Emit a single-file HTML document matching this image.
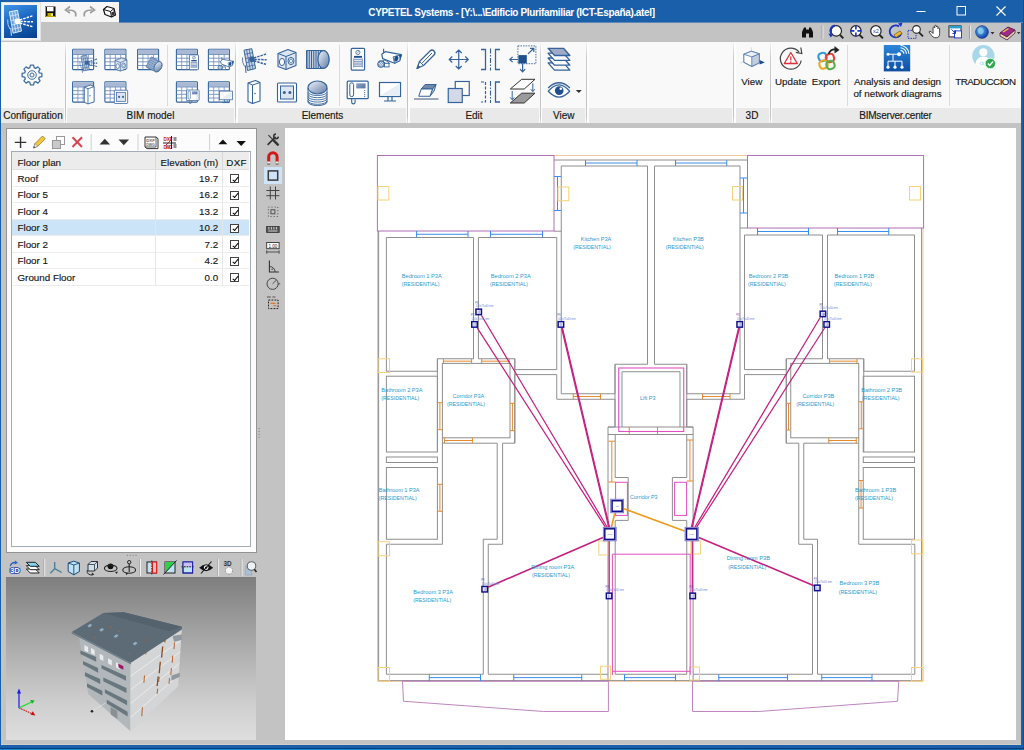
<!DOCTYPE html>
<html lang="en"><head><meta charset="utf-8"><title>CYPETEL Systems</title>
<style>
*{box-sizing:border-box}
html,body{margin:0;padding:0}
body{width:1024px;height:750px;overflow:hidden;position:relative;background:#1a5fa9;font-family:"Liberation Sans",sans-serif;font-size:10px;color:#1a1a1a}
.abs{position:absolute}
#win{left:1px;top:22px;width:1020px;height:722.8px;background:#c3c3c3}
#title{left:0;top:0;width:1024px;height:22px;background:#1a5fa9}
#ttext{left:368px;top:5.5px;width:287px;height:14px;color:#fff;font-size:10px;line-height:14px;white-space:nowrap;text-align:center;font-weight:bold;letter-spacing:-0.34px}
#appb{left:1px;top:2px;width:39.5px;height:38.5px;background:#f4f4f4;border:1px solid #e2e2e2}
#appi{left:4px;top:5px;width:33px;height:32.5px;background:linear-gradient(160deg,#3e95e8 0%,#1a66c0 45%,#06408c 100%)}
#qat{left:40.5px;top:2px;width:78.5px;height:20.3px;background:#f6f6f6}
#ribbon{left:1px;top:42px;width:1020px;height:66px;background:#f9f9f9}
#rlabels{left:1px;top:108px;width:1020px;height:15px;background:#e9e9e9}
.gl{position:absolute;top:108px;height:15px;line-height:15px;font-size:10px;text-align:center;white-space:nowrap;color:#111}
.gsep{position:absolute;top:42px;width:3.5px;height:81px;background:linear-gradient(90deg,#f9f9f9 0,#f9f9f9 .8px,transparent .6px,transparent 2.4px,#fdfdfd 2.4px),linear-gradient(180deg,#f3f3f3 0,#cdcdcd 18%,#c2c2c2 60%,#c4c4c4 92%,#e4e4e4 100%)}
.isep{position:absolute;top:45px;width:1px;height:61px;background:#dcdcdc}
.bl{position:absolute;font-size:9.8px;line-height:12px;text-align:center;white-space:nowrap;color:#222}
#lpanel{left:6px;top:128px;width:251px;height:425px;background:#fcfcfc;border:1px solid #939393}
#tbl{left:11px;top:151.2px;width:239.5px;height:395.8px;background:#fff;border:1px solid #a3acb9}
table{border-collapse:collapse;table-layout:fixed;width:237px;font-size:9.8px}
td,th{height:16.5px;padding:1.4px 0 0 0;border-bottom:1px solid #ececec;border-right:1px solid #e6e6e6;font-weight:normal;white-space:nowrap;overflow:hidden;line-height:14px}
th{background:#ececec;border-right:1px solid #d8d8d8;border-bottom:1px solid #e0e0e0;height:17.8px}
td.n,th.n{text-align:left;padding-left:5.5px}
td.e,th.e{text-align:right;padding-right:3.5px}
td.c,th.c{text-align:center;border-right:none;padding-right:2px}
th.c{padding-right:0;padding-left:1.5px;letter-spacing:.3px}
tr.sel td{background:#cce4f7}
.hs{position:relative;top:1.4px}
table,.gl,.bl{-webkit-text-stroke:0.14px #222;color:#111}
.cb{display:inline-block;width:9px;height:9px;border:1px solid #444;background:#fff;vertical-align:-1.5px;position:relative}
.cb:after{content:"";position:absolute;left:2.2px;top:0.2px;width:2.4px;height:4.8px;border:solid #000;border-width:0 1.7px 1.7px 0;transform:rotate(40deg)}
#v3d{left:6px;top:577px;width:249.7px;height:163px;background:linear-gradient(180deg,#7e7e7e 0%,#a9a9a9 40%,#cfcfcf 78%,#dedede 100%)}
#draw{left:284.5px;top:128px;width:731.5px;height:612px;background:#fff}
#vsel{left:263.7px;top:166.7px;width:18px;height:17.1px;background:#cfe4f7}
#botline{left:1px;top:744px;width:1020px;height:1px;background:#d2cdc8}
#bot2{left:0;top:747.5px;width:1024px;height:1.6px;background:#0a3c82}
#bot3{left:0;top:749px;width:1024px;height:1px;background:linear-gradient(90deg,#1e8ed0 0,#1e86c8 40%,#1a62ac 100%)}
#tb2{left:119px;top:22px;width:905px;height:1px;background:#5e88b9}
#rb{left:1023px;top:0;width:1px;height:750px;background:#0f4f98}
svg{position:absolute;left:0;top:0;overflow:visible}
</style></head>
<body>
<div class="abs" id="title"></div>
<div class="abs" id="ttext">CYPETEL Systems - [Y:\...\Edificio Plurifamiliar (ICT-España).atel]</div>
<div class="abs" id="win"></div>
<div class="abs" id="tb2"></div><div class="abs" id="rb"></div>
<div class="abs" id="appb"></div><div class="abs" id="appi"></div>
<div class="abs" id="qat"></div>
<div class="abs" id="ribbon"></div><div class="abs" id="rlabels"></div>
<div class="gsep" style="left:63.75px"></div>
<div class="gsep" style="left:234.45px"></div>
<div class="gsep" style="left:406.45px"></div>
<div class="gsep" style="left:538.75px"></div>
<div class="gsep" style="left:585.45px"></div>
<div class="gsep" style="left:732.25px"></div>
<div class="gsep" style="left:768.5500000000001px"></div>
<div class="isep" style="left:167px"></div>
<div class="isep" style="left:338.5px"></div>
<div class="isep" style="left:847px"></div>
<div class="isep" style="left:949px"></div>
<div class="gl" style="left:-27px;width:120px">Configuration</div>
<div class="gl" style="left:90.5px;width:120px">BIM model</div>
<div class="gl" style="left:262.5px;width:120px">Elements</div>
<div class="gl" style="left:414px;width:120px">Edit</div>
<div class="gl" style="left:503.79999999999995px;width:120px">View</div>
<div class="gl" style="left:692px;width:120px">3D</div>
<div class="gl" style="left:835.4px;width:120px"><span style="letter-spacing:-.2px">BIMserver.center</span></div>
<div class="bl" style="left:691.8px;top:75.5px;width:120px">View</div>
<div class="bl" style="left:730.8px;top:75.5px;width:120px">Update</div>
<div class="bl" style="left:766px;top:75.5px;width:120px">Export</div>
<div class="bl" style="left:837.5px;top:75.5px;width:120px">Analysis and design</div>
<div class="bl" style="left:837.5px;top:88.4px;width:120px">of network diagrams</div>
<div class="bl" style="left:925.4px;top:75.5px;width:120px"><span style="letter-spacing:-.5px">TRADUCCION</span></div>
<div class="abs" id="lpanel"></div>
<div class="abs" id="tbl"><table><colgroup><col style="width:143.2px"><col style="width:67px"><col style="width:26.8px"></colgroup>
<tr><th class="n"><span class="hs">Floor plan</span></th><th class="e"><span class="hs">Elevation (m)</span></th><th class="c"><span class="hs">DXF</span></th></tr>
<tr><td class="n">Roof</td><td class="e">19.7</td><td class="c"><span class="cb"></span></td></tr>
<tr><td class="n">Floor 5</td><td class="e">16.2</td><td class="c"><span class="cb"></span></td></tr>
<tr><td class="n">Floor 4</td><td class="e">13.2</td><td class="c"><span class="cb"></span></td></tr>
<tr class="sel"><td class="n">Floor 3</td><td class="e">10.2</td><td class="c"><span class="cb"></span></td></tr>
<tr><td class="n">Floor 2</td><td class="e">7.2</td><td class="c"><span class="cb"></span></td></tr>
<tr><td class="n">Floor 1</td><td class="e">4.2</td><td class="c"><span class="cb"></span></td></tr>
<tr><td class="n">Ground Floor</td><td class="e">0.0</td><td class="c"><span class="cb"></span></td></tr>
</table></div>
<div class="abs" id="v3d"></div>
<div class="abs" id="vsel"></div>
<div class="abs" id="draw"></div>
<div class="abs" id="botline"></div><div class="abs" id="bot2"></div><div class="abs" id="bot3"></div>
<svg id="ricons" width="1024" height="130" viewBox="0 0 1024 130">
<defs><linearGradient id="tg" x1="0" y1="0" x2="1" y2="1"><stop offset="0" stop-color="#f2f5fa"/><stop offset="1" stop-color="#5f7aa6"/></linearGradient>
<linearGradient id="pg" x1="0" y1="0" x2="1" y2="1"><stop offset="0" stop-color="#93a5c8"/><stop offset="1" stop-color="#5573a5"/></linearGradient>
<linearGradient id="ag" x1="0" y1="0" x2="0" y2="1"><stop offset="0" stop-color="#2b86d9"/><stop offset="1" stop-color="#0f4fa3"/></linearGradient></defs>
<g transform="translate(32 75) scale(1)"><path d="M7.30 -2.12 L9.88 -1.56 L9.88 1.56 L7.30 2.12 L6.66 3.66 L8.09 5.88 L5.88 8.09 L3.66 6.66 L2.12 7.30 L1.56 9.88 L-1.56 9.88 L-2.12 7.30 L-3.66 6.66 L-5.88 8.09 L-8.09 5.88 L-6.66 3.66 L-7.30 2.12 L-9.88 1.56 L-9.88 -1.56 L-7.30 -2.12 L-6.66 -3.66 L-8.09 -5.88 L-5.88 -8.09 L-3.66 -6.66 L-2.12 -7.30 L-1.56 -9.88 L1.56 -9.88 L2.12 -7.30 L3.66 -6.66 L5.88 -8.09 L8.09 -5.88 L6.66 -3.66 Z" fill="#f9f9f9" stroke="#3f6fa6" stroke-width="1.3" stroke-linejoin="round"/><circle r="4.3" fill="none" stroke="#3f6fa6" stroke-width="1"/><circle r="2" fill="none" stroke="#3f6fa6" stroke-width="1"/></g>
<g transform="translate(83.2 59.5) scale(1)"><rect x="-10.6" y="-10.3" width="21" height="20.4" rx=".8" fill="#fff" stroke="#35639b" stroke-width="1.1"/><rect x="-10" y="-9.8" width="19.8" height="4.6" fill="#a9b9d3"/><path d="M-10.6 -5H10.4M-10.6 -1.3H10.4M-10.6 2.3H10.4M-10.6 6H10.4" stroke="#5d82b5" stroke-width=".8" fill="none"/><path d="M-5.3 -5V10M-.1 -5V10M5.2 -5V10" stroke="#6f8fbb" stroke-width=".8" fill="none"/><rect x="-1.5" y="-3" width="13" height="13" fill="#fff" opacity=".0"/><g transform="translate(5 3.5) scale(0.72)"><path d="M-10 -9.3 L-2.2 -10.8 L1.6 9 L-6.4 11 Z" fill="#c9d5e6" stroke="#35639b" stroke-width="1" stroke-linejoin="round"/><path d="M-9.2 -5.2L-1.4 -6.8M-8.3 -1L-.6 -2.7M-7.6 3.2L.2 1.5M-6.9 7.2L1 5.4M-7.4 -9.8L-3.7 10.3M-4.8 -10.3L-1.1 9.7" stroke="#35639b" stroke-width="0.75" fill="none"/><path d="M-11.5 -2 Q-12 3 -9.5 7" stroke="#35639b" stroke-width="0.8" fill="none"/><path d="M-8.6 6 L-8 13.5" stroke="#35639b" stroke-width="1"/><circle cx="-2.2" cy="-.3" r="2.7" fill="#35639b"/><path d="M0 -1.6 L12 -5.4 M.4 -.1 L12.6 .2 M0 1.4 L12 4.8" stroke="#35639b" stroke-width="1.5" stroke-dasharray="2.4 1"/></g></g>
<g transform="translate(115.5 59.5) scale(1)"><rect x="-10.6" y="-10.3" width="21" height="20.4" rx=".8" fill="#fff" stroke="#35639b" stroke-width="1.1"/><rect x="-10" y="-9.8" width="19.8" height="4.6" fill="#a9b9d3"/><path d="M-10.6 -5H10.4M-10.6 -1.3H10.4M-10.6 2.3H10.4M-10.6 6H10.4" stroke="#5d82b5" stroke-width=".8" fill="none"/><path d="M-5.3 -5V10M-.1 -5V10M5.2 -5V10" stroke="#6f8fbb" stroke-width=".8" fill="none"/><rect x="-1" y="-1.5" width="13" height="13" fill="#fff" opacity=".0"/><g transform="translate(5.5 5) scale(0.66)"><path d="M-9 -6 L1 -10 L9 -7 L9 6 L-1 10 L-9 7 Z" fill="#dde5f0" stroke="#35639b" stroke-width="1.1" stroke-linejoin="round"/><path d="M-9 -6 L-1 -3 L9 -7 M-1 -3 V10" fill="none" stroke="#35639b" stroke-width="1"/><ellipse cx="-5" cy="2.5" rx="2.6" ry="3.6" fill="#fff" stroke="#35639b" stroke-width="1"/><ellipse cx="4" cy="1.5" rx="3" ry="3.6" fill="#fff" stroke="#35639b" stroke-width="1"/><ellipse cx="4" cy="1.5" rx="1.5" ry="2" fill="none" stroke="#35639b" stroke-width=".8"/></g></g>
<g transform="translate(148.2 59.5) scale(1)"><rect x="-10.6" y="-10.3" width="21" height="20.4" rx=".8" fill="#fff" stroke="#35639b" stroke-width="1.1"/><rect x="-10" y="-9.8" width="19.8" height="4.6" fill="#a9b9d3"/><path d="M-10.6 -5H10.4M-10.6 -1.3H10.4M-10.6 2.3H10.4M-10.6 6H10.4" stroke="#5d82b5" stroke-width=".8" fill="none"/><path d="M-5.3 -5V10M-.1 -5V10M5.2 -5V10" stroke="#6f8fbb" stroke-width=".8" fill="none"/><rect x="0" y="-1" width="13" height="13" fill="#fff" opacity=".0"/><g transform="translate(6.5 5.5) scale(0.62)"><g transform="translate(0 0) scale(1)"><g transform="rotate(28)"><path d="M-11 -9 H6 A5.5 9 0 0 1 6 9 H-11 Z" fill="#e9eef6" stroke="#35639b" stroke-width="1"/><path d="M-9.6 -9V9M-7.8 -9V9M-6 -9V9M-4.2 -9V9M-2.4 -9V9M-.6 -9V9M1.2 -9V9M3 -9V9" stroke="#35639b" stroke-width="1"/><ellipse cx="6" cy="0" rx="5.6" ry="8.8" fill="url(#tg)" stroke="#35639b" stroke-width="1.2"/></g></g></g></g>
<g transform="translate(187 59.5) scale(1)"><rect x="-10.6" y="-10.3" width="21" height="20.4" rx=".8" fill="#fff" stroke="#35639b" stroke-width="1.1"/><rect x="-10" y="-9.8" width="19.8" height="4.6" fill="#a9b9d3"/><path d="M-10.6 -5H10.4M-10.6 -1.3H10.4M-10.6 2.3H10.4M-10.6 6H10.4" stroke="#5d82b5" stroke-width=".8" fill="none"/><path d="M-5.3 -5V10M-.1 -5V10M5.2 -5V10" stroke="#6f8fbb" stroke-width=".8" fill="none"/><rect x="0.5" y="-3.5" width="13" height="13" fill="#fff" opacity=".0"/><g transform="translate(7 3) scale(0.68)"><rect x="-6.8" y="-11.2" width="13.4" height="21.8" rx="1" fill="#fff" stroke="#35639b" stroke-width="1.2"/><circle cx="-.1" cy="-7" r="2.1" fill="none" stroke="#35639b" stroke-width=".8"/><path d="M-1.2 -6.2 L1 -8" stroke="#35639b" stroke-width=".6"/><rect x="-4" y="-3.6" width="8" height="1.9" fill="#1d4f8f"/><path d="M-4 -.1H4M-4 2.2H4M-4 4.6H4M-4 6.8H4" stroke="#8ea4c8" stroke-width="1.5"/><path d="M-4.4 -1V8M4.4 -1V8" stroke="#35639b" stroke-width=".6"/></g></g>
<g transform="translate(219 59.5) scale(1)"><rect x="-10.6" y="-10.3" width="21" height="20.4" rx=".8" fill="#fff" stroke="#35639b" stroke-width="1.1"/><rect x="-10" y="-9.8" width="19.8" height="4.6" fill="#a9b9d3"/><path d="M-10.6 -5H10.4M-10.6 -1.3H10.4M-10.6 2.3H10.4M-10.6 6H10.4" stroke="#5d82b5" stroke-width=".8" fill="none"/><path d="M-5.3 -5V10M-.1 -5V10M5.2 -5V10" stroke="#6f8fbb" stroke-width=".8" fill="none"/><rect x="0.5" y="-1.5" width="13" height="13" fill="#fff" opacity=".0"/><g transform="translate(7 5) scale(0.66)"><path d="M-6.4 -10.8 V-6" stroke="#35639b" stroke-width="1.1"/><path d="M-7.3 1.6 L-2.2 5.5 L-.6 3.6 L-5 .4 Z" fill="#fff" stroke="#35639b" stroke-width=".9" stroke-linejoin="round"/><rect x="-5.6" y="3.8" width="4.6" height="3.6" fill="#fff" stroke="#35639b" stroke-width=".9"/><circle cx="-9" cy="4.6" r="3.2" fill="#dfe6f1" stroke="#35639b" stroke-width="1.1"/><path d="M-11 2.4L-7.2 6.8M-11.6 4.4L-9 7.4M-9.6 1.8L-6.4 5.2" stroke="#35639b" stroke-width=".6"/><path d="M-8.2 -5.2 L-4.8 -7.8 L11.4 -4.8 L9.7 1.2 L4.6 3.8 L-7.3 -.9 Z" fill="#fff" stroke="#35639b" stroke-width="1.2" stroke-linejoin="round"/><path d="M3 -2.6 L11.4 -4.8 L9.7 1.2 L4.6 3.8 Z" fill="#e3e9f3" stroke="#35639b" stroke-width=".9" stroke-linejoin="round"/><ellipse cx="6.3" cy="-.8" rx="1.9" ry="2.9" fill="#1d4f8f" transform="rotate(18 6.3 -.8)"/><path d="M9 -4.4 L11.4 -4.8 L10 .6Z" fill="#1d4f8f"/></g></g>
<g transform="translate(83.2 92) scale(1)"><rect x="-10.6" y="-10.3" width="21" height="20.4" rx=".8" fill="#fff" stroke="#35639b" stroke-width="1.1"/><rect x="-10" y="-9.8" width="19.8" height="4.6" fill="#a9b9d3"/><path d="M-10.6 -5H10.4M-10.6 -1.3H10.4M-10.6 2.3H10.4M-10.6 6H10.4" stroke="#5d82b5" stroke-width=".8" fill="none"/><path d="M-5.3 -5V10M-.1 -5V10M5.2 -5V10" stroke="#6f8fbb" stroke-width=".8" fill="none"/><rect x="-0.5" y="-4" width="13" height="13" fill="#fff" opacity=".0"/><g transform="translate(6 2.5) scale(0.82)"><path d="M-6 -9 L1.5 -11.5 L6 -9.5 V9 L-1.5 11.5 L-6 9.5 Z" fill="#fff" stroke="#35639b" stroke-width="1.1" stroke-linejoin="round"/><path d="M-6 -9 L-1.5 -7 L6 -9.5 M-1.5 -7 V11.5" fill="none" stroke="#35639b" stroke-width="1"/><circle cx="1" cy="1.5" r=".8" fill="#35639b"/></g></g>
<g transform="translate(115.5 92) scale(1)"><rect x="-10.6" y="-10.3" width="21" height="20.4" rx=".8" fill="#fff" stroke="#35639b" stroke-width="1.1"/><rect x="-10" y="-9.8" width="19.8" height="4.6" fill="#a9b9d3"/><path d="M-10.6 -5H10.4M-10.6 -1.3H10.4M-10.6 2.3H10.4M-10.6 6H10.4" stroke="#5d82b5" stroke-width=".8" fill="none"/><path d="M-5.3 -5V10M-.1 -5V10M5.2 -5V10" stroke="#6f8fbb" stroke-width=".8" fill="none"/><rect x="-1" y="-2" width="13" height="13" fill="#fff" opacity=".0"/><g transform="translate(5.5 4.5) scale(0.7)"><rect x="-9.5" y="-9" width="19" height="19" rx="1" fill="#fff" stroke="#35639b" stroke-width="1.1"/><rect x="-6.5" y="-6" width="13" height="13" fill="#dde5f0" stroke="#35639b" stroke-width="1"/><circle cx="-2.7" cy=".6" r="1.5" fill="#35639b"/><circle cx="2.9" cy=".6" r="1.5" fill="#35639b"/></g></g>
<g transform="translate(187 92) scale(1)"><rect x="-10.6" y="-10.3" width="21" height="20.4" rx=".8" fill="#fff" stroke="#35639b" stroke-width="1.1"/><rect x="-10" y="-9.8" width="19.8" height="4.6" fill="#a9b9d3"/><path d="M-10.6 -5H10.4M-10.6 -1.3H10.4M-10.6 2.3H10.4M-10.6 6H10.4" stroke="#5d82b5" stroke-width=".8" fill="none"/><path d="M-5.3 -5V10M-.1 -5V10M5.2 -5V10" stroke="#6f8fbb" stroke-width=".8" fill="none"/><rect x="-0.5" y="-2" width="13" height="13" fill="#fff" opacity=".0"/><g transform="translate(6 4.5) scale(0.6)"><rect x="-10.8" y="-10.8" width="21" height="17.5" rx="1" fill="#fff" stroke="#35639b" stroke-width="1.2"/><rect x="-8.2" y="-9.1" width="3.8" height="13.6" rx="1.6" fill="#fff" stroke="#35639b" stroke-width="1"/><rect x="-1.8" y="-8.7" width="9.4" height="5.1" fill="url(#pg)"/><circle cx="6.7" cy="-1.5" r=".6" fill="#35639b"/><circle cx="6.7" cy="0.6" r=".6" fill="#35639b"/><circle cx="6.7" cy="2.7" r=".6" fill="#35639b"/><circle cx="6.7" cy="4.6" r=".6" fill="#35639b"/><path d="M-6.3 6.7 V10.2 A1.7 1.7 0 0 0 -2.9 10.2 V7.6" fill="none" stroke="#35639b" stroke-width="1.1"/></g></g>
<g transform="translate(219 92) scale(1)"><rect x="-10.6" y="-10.3" width="21" height="20.4" rx=".8" fill="#fff" stroke="#35639b" stroke-width="1.1"/><rect x="-10" y="-9.8" width="19.8" height="4.6" fill="#a9b9d3"/><path d="M-10.6 -5H10.4M-10.6 -1.3H10.4M-10.6 2.3H10.4M-10.6 6H10.4" stroke="#5d82b5" stroke-width=".8" fill="none"/><path d="M-5.3 -5V10M-.1 -5V10M5.2 -5V10" stroke="#6f8fbb" stroke-width=".8" fill="none"/><rect x="0.5" y="-1.5" width="13" height="13" fill="#fff" opacity=".0"/><g transform="translate(7 5) scale(0.62)"><rect x="-10.5" y="-9.5" width="21" height="14" fill="#fff" stroke="#35639b" stroke-width="1.2"/><path d="M-9 3 L9 -8 V3 Z" fill="#e9eef6"/><path d="M-2 4.5 V8.5 M2 4.5 V8.5 M-6 9 H6" stroke="#35639b" stroke-width="1.2" fill="none"/></g></g>
<g transform="translate(254 59.5) scale(1)"><path d="M-10 -9.3 L-2.2 -10.8 L1.6 9 L-6.4 11 Z" fill="#c9d5e6" stroke="#35639b" stroke-width="1" stroke-linejoin="round"/><path d="M-9.2 -5.2L-1.4 -6.8M-8.3 -1L-.6 -2.7M-7.6 3.2L.2 1.5M-6.9 7.2L1 5.4M-7.4 -9.8L-3.7 10.3M-4.8 -10.3L-1.1 9.7" stroke="#35639b" stroke-width="0.75" fill="none"/><path d="M-11.5 -2 Q-12 3 -9.5 7" stroke="#35639b" stroke-width="0.8" fill="none"/><path d="M-8.6 6 L-8 13.5" stroke="#35639b" stroke-width="1"/><circle cx="-2.2" cy="-.3" r="2.7" fill="#35639b"/><path d="M0 -1.6 L12 -5.4 M.4 -.1 L12.6 .2 M0 1.4 L12 4.8" stroke="#35639b" stroke-width="1.5" stroke-dasharray="2.4 1"/></g>
<g transform="translate(254 92) scale(1)"><path d="M-6 -9 L1.5 -11.5 L6 -9.5 V9 L-1.5 11.5 L-6 9.5 Z" fill="#fff" stroke="#35639b" stroke-width="1.1" stroke-linejoin="round"/><path d="M-6 -9 L-1.5 -7 L6 -9.5 M-1.5 -7 V11.5" fill="none" stroke="#35639b" stroke-width="1"/><circle cx="1" cy="1.5" r=".8" fill="#35639b"/></g>
<g transform="translate(287 59.5) scale(1)"><path d="M-9 -6 L1 -10 L9 -7 L9 6 L-1 10 L-9 7 Z" fill="#dde5f0" stroke="#35639b" stroke-width="1.1" stroke-linejoin="round"/><path d="M-9 -6 L-1 -3 L9 -7 M-1 -3 V10" fill="none" stroke="#35639b" stroke-width="1"/><ellipse cx="-5" cy="2.5" rx="2.6" ry="3.6" fill="#fff" stroke="#35639b" stroke-width="1"/><ellipse cx="4" cy="1.5" rx="3" ry="3.6" fill="#fff" stroke="#35639b" stroke-width="1"/><ellipse cx="4" cy="1.5" rx="1.5" ry="2" fill="none" stroke="#35639b" stroke-width=".8"/></g>
<g transform="translate(287 92) scale(1)"><rect x="-9.5" y="-9" width="19" height="19" rx="1" fill="#fff" stroke="#35639b" stroke-width="1.1"/><rect x="-6.5" y="-6" width="13" height="13" fill="#dde5f0" stroke="#35639b" stroke-width="1"/><circle cx="-2.7" cy=".6" r="1.5" fill="#35639b"/><circle cx="2.9" cy=".6" r="1.5" fill="#35639b"/></g>
<g transform="translate(317.5 59.5) scale(1)"><path d="M-11 -9 H6 A5.5 9 0 0 1 6 9 H-11 Z" fill="#e9eef6" stroke="#35639b" stroke-width="1"/><path d="M-9.6 -9V9M-7.8 -9V9M-6 -9V9M-4.2 -9V9M-2.4 -9V9M-.6 -9V9M1.2 -9V9M3 -9V9" stroke="#35639b" stroke-width="1"/><ellipse cx="6" cy="0" rx="5.6" ry="8.8" fill="url(#tg)" stroke="#35639b" stroke-width="1.2"/></g>
<g transform="translate(317.5 93) scale(1)"><path d="M-9.5 -5 V9 A9.5 3.5 0 0 0 9.5 9 V-5 Z" fill="#fff" stroke="#35639b" stroke-width="1"/><path d="M-9.5 -1A9.5 3.5 0 0 0 9.5 -1M-9.5 1.2A9.5 3.5 0 0 0 9.5 1.2M-9.5 3.4A9.5 3.5 0 0 0 9.5 3.4M-9.5 5.6A9.5 3.5 0 0 0 9.5 5.6M-9.5 7.8A9.5 3.5 0 0 0 9.5 7.8" fill="none" stroke="#35639b" stroke-width=".9"/><ellipse cx="0" cy="-5.5" rx="9.5" ry="6.5" fill="url(#tg)" stroke="#35639b" stroke-width="1.2"/></g>
<g transform="translate(358 59.5) scale(1)"><rect x="-6.8" y="-11.2" width="13.4" height="21.8" rx="1" fill="#fff" stroke="#35639b" stroke-width="1.2"/><circle cx="-.1" cy="-7" r="2.1" fill="none" stroke="#35639b" stroke-width=".8"/><path d="M-1.2 -6.2 L1 -8" stroke="#35639b" stroke-width=".6"/><rect x="-4" y="-3.6" width="8" height="1.9" fill="#1d4f8f"/><path d="M-4 -.1H4M-4 2.2H4M-4 4.6H4M-4 6.8H4" stroke="#8ea4c8" stroke-width="1.5"/><path d="M-4.4 -1V8M4.4 -1V8" stroke="#35639b" stroke-width=".6"/></g>
<g transform="translate(358 92) scale(1)"><rect x="-10.8" y="-10.8" width="21" height="17.5" rx="1" fill="#fff" stroke="#35639b" stroke-width="1.2"/><rect x="-8.2" y="-9.1" width="3.8" height="13.6" rx="1.6" fill="#fff" stroke="#35639b" stroke-width="1"/><rect x="-1.8" y="-8.7" width="9.4" height="5.1" fill="url(#pg)"/><circle cx="6.7" cy="-1.5" r=".6" fill="#35639b"/><circle cx="6.7" cy="0.6" r=".6" fill="#35639b"/><circle cx="6.7" cy="2.7" r=".6" fill="#35639b"/><circle cx="6.7" cy="4.6" r=".6" fill="#35639b"/><path d="M-6.3 6.7 V10.2 A1.7 1.7 0 0 0 -2.9 10.2 V7.6" fill="none" stroke="#35639b" stroke-width="1.1"/></g>
<g transform="translate(390 59.5) scale(1)"><path d="M-6.4 -10.8 V-6" stroke="#35639b" stroke-width="1.1"/><path d="M-7.3 1.6 L-2.2 5.5 L-.6 3.6 L-5 .4 Z" fill="#fff" stroke="#35639b" stroke-width=".9" stroke-linejoin="round"/><rect x="-5.6" y="3.8" width="4.6" height="3.6" fill="#fff" stroke="#35639b" stroke-width=".9"/><circle cx="-9" cy="4.6" r="3.2" fill="#dfe6f1" stroke="#35639b" stroke-width="1.1"/><path d="M-11 2.4L-7.2 6.8M-11.6 4.4L-9 7.4M-9.6 1.8L-6.4 5.2" stroke="#35639b" stroke-width=".6"/><path d="M-8.2 -5.2 L-4.8 -7.8 L11.4 -4.8 L9.7 1.2 L4.6 3.8 L-7.3 -.9 Z" fill="#fff" stroke="#35639b" stroke-width="1.2" stroke-linejoin="round"/><path d="M3 -2.6 L11.4 -4.8 L9.7 1.2 L4.6 3.8 Z" fill="#e3e9f3" stroke="#35639b" stroke-width=".9" stroke-linejoin="round"/><ellipse cx="6.3" cy="-.8" rx="1.9" ry="2.9" fill="#1d4f8f" transform="rotate(18 6.3 -.8)"/><path d="M9 -4.4 L11.4 -4.8 L10 .6Z" fill="#1d4f8f"/></g>
<g transform="translate(390 92) scale(1)"><rect x="-10.5" y="-9.5" width="21" height="14" fill="#fff" stroke="#35639b" stroke-width="1.2"/><path d="M-9 3 L9 -8 V3 Z" fill="#e9eef6"/><path d="M-2 4.5 V8.5 M2 4.5 V8.5 M-6 9 H6" stroke="#35639b" stroke-width="1.2" fill="none"/></g>
<g transform="translate(426 59.5) scale(1)"><path d="M-9 9 L-6.5 2 L4 -8.5 A2.6 2.6 0 0 1 8 -4.5 L-2.5 6 Z" fill="#fff" stroke="#35639b" stroke-width="1.3" stroke-linejoin="round"/><path d="M-6.5 2 L-2.5 6 M-9 9 L-6 7.8 L-7.8 6 Z M-4.3 4 L6 -6.5" stroke="#35639b" stroke-width="1" fill="#35639b"/></g>
<g transform="translate(426 92) scale(1)"><path d="M-12 7H12.5" stroke="#8e99ad" stroke-width="1.7"/><path d="M-1 -7.5 L10 -7.5 L6.5 -3 L-4.75 -3 Z" fill="#7488ad" stroke="#35639b" stroke-width="1" stroke-linejoin="round"/><path d="M10 -7.5 L6.5 -3 L4 4.25 L8.2 -1.2 Z" fill="#c5cfdf" stroke="#35639b" stroke-width="1" stroke-linejoin="round"/><path d="M-4.75 -3 L6.5 -3 L4 4.25 L-7.25 4.25 Z" fill="#fff" stroke="#35639b" stroke-width="1" stroke-linejoin="round"/></g>
<g transform="translate(458.75 59.5) scale(1)"><path d="M-9.5 0H9.5M0 -9.5V9.5M-3 -6.5L0 -9.5L3 -6.5M-3 6.5L0 9.5L3 6.5M-6.5 -3L-9.5 0L-6.5 3M6.5 -3L9.5 0L6.5 3" fill="none" stroke="#35639b" stroke-width="1.2"/></g>
<g transform="translate(458.75 92) scale(1)"><rect x="-3.5" y="-10.5" width="14" height="14" fill="#fff" stroke="#35639b" stroke-width="1.2"/><rect x="-10.5" y="-3.5" width="14" height="14" fill="#d3d9e6" stroke="#35639b" stroke-width="1.2"/></g>
<g transform="translate(490.5 59.5) scale(1)"><path d="M-9.5 -10H-5V10H-9.5M9.5 -10H5V10H9.5" fill="none" stroke="#35639b" stroke-width="1.3"/><path d="M0 -11V11" stroke="#35639b" stroke-width="1.1" stroke-dasharray="5 1.5 1.5 1.5"/></g>
<g transform="translate(490.5 92) scale(1)"><path d="M-9.5 -10H-5V10H-9.5" fill="none" stroke="#35639b" stroke-width="1.2" stroke-dasharray="3 1.5"/><path d="M9.5 -10H5V10H9.5" fill="none" stroke="#35639b" stroke-width="1.3"/><path d="M0 -11V11" stroke="#35639b" stroke-width="1.1" stroke-dasharray="5 1.5 1.5 1.5"/></g>
<g transform="translate(523 59.5) scale(1)"><rect x="-5.1" y="-13.6" width="18" height="17.8" fill="none" stroke="#35639b" stroke-width=".9" stroke-dasharray="1.5 1.1"/><rect x="-4.6" y="-4.4" width="8.4" height="8.3" fill="#1d4f8f"/><path d="M-5 0H-13M-10.4 -2.6L-13.2 0L-10.4 2.6M-.4 4V12M-3 9.6L-.4 12.4L2.2 9.6M5 -5.6L10.6 -11M7 -11.2H10.8V-7.4" fill="none" stroke="#35639b" stroke-width="1.2"/></g>
<g transform="translate(523 92) scale(1)"><path d="M-12.7 -3 L-1.3 -12.7 H12 L1.2 -3 Z" fill="#fff" stroke="#333" stroke-width="1" stroke-linejoin="round"/><path d="M-12.7 11 L-1.3 1.2 H12 L1.2 11 Z" fill="#9a9a9a" stroke="#333" stroke-width="1" stroke-linejoin="round"/><path d="M-10.8 -1V7.6M-12.8 5.4L-10.8 7.8L-8.8 5.4M9.8 -8.7V-.6M7.8 -2.8L9.8 -.4L11.8 -2.8" fill="none" stroke="#35639b" stroke-width="1"/></g>
<path d="M548.1 62.9 H563.5 L569.9 70.1 H554.5 Z" fill="#fff" stroke="#35639b" stroke-width="1.3" stroke-linejoin="round"/><path d="M548.1 58 H563.5 L569.9 65.2 H554.5 Z" fill="#fff" stroke="#35639b" stroke-width="1.3" stroke-linejoin="round"/><path d="M548.1 53.2 H563.5 L569.9 60.4 H554.5 Z" fill="#fff" stroke="#35639b" stroke-width="1.3" stroke-linejoin="round"/><path d="M548.1 48.3 H563.5 L569.9 55.5 H554.5 Z" fill="#9dabc6" stroke="#35639b" stroke-width="1.3" stroke-linejoin="round"/>
<path d="M548.3 91.2 Q559 78.5 569.7 91.2 Q559 103 548.3 91.2 Z" fill="#fff" stroke="#35639b" stroke-width="1.3" stroke-linejoin="round"/><path d="M548.1 88 Q559 77.5 569.9 88" fill="none" stroke="#35639b" stroke-width="1.2"/><circle cx="559.2" cy="90.6" r="4.3" fill="#1d4f8f"/><circle cx="560.8" cy="88.8" r="1.3" fill="#fff"/>
<path d="M575.8 89.9 h6 l-3 3 z" fill="#333"/>
<g transform="translate(751.8 58.8) scale(1)"><path d="M-.5 -11.5V-7.5M-8 2.5L-11.5 4.5M8 3.5L11 5" stroke="#c9d3e3" stroke-width=".8"/><path d="M-8 -4.5 L-.5 -7.5 L7.5 -5 V4 L0 7.7 L-8 3.5 Z" fill="#fff" stroke="#5f82b4" stroke-width="1.1" stroke-linejoin="round"/><path d="M0 -2 L7.5 -5 V4 L0 7.7Z" fill="#c3cde0" stroke="#5f82b4" stroke-width=".9" stroke-linejoin="round"/><path d="M-8 -4.5 L0 -2 L7.5 -5 L-.5 -7.5Z" fill="#eef2f8" stroke="#5f82b4" stroke-width=".9" stroke-linejoin="round"/><path d="M7.8 1.2 L13 3.6 L7.8 5.6 Z" fill="#1d4f8f"/></g>
<g transform="translate(790.8 58.5) scale(1)"><path d="M8.2 -6.5 A10.5 10.5 0 1 0 10.4 2" fill="none" stroke="#444" stroke-width="1.2"/><path d="M5 -6.2 L11 -5 L10 -11" fill="none" stroke="#444" stroke-width="1.2"/><path d="M0 -6 L6.5 5 H-6.5 Z" fill="#fff" stroke="#d8333b" stroke-width="1.3" stroke-linejoin="round"/><path d="M0 -2V2" stroke="#d8333b" stroke-width="1.3"/><circle cx="0" cy="3.6" r=".8" fill="#d8333b"/></g>
<g transform="translate(826.5 60) scale(1)"><rect x="-8" y="-7" width="8" height="8" rx="3.2" fill="none" stroke="#2a9fd8" stroke-width="2.1" transform="rotate(-20 -4 -3)"/><rect x="-0.5" y="-6" width="8" height="8" rx="3.2" fill="none" stroke="#e0483e" stroke-width="2.1" transform="rotate(-20 3.5 -2)"/><rect x="-7" y="0.5" width="8" height="8" rx="3.2" fill="none" stroke="#f0a624" stroke-width="2.1" transform="rotate(-20 -3 4.5)"/><rect x="0" y="1" width="8" height="8" rx="3.2" fill="none" stroke="#58b04a" stroke-width="2.1" transform="rotate(-20 4 5)"/><path d="M2 -6 Q4 -11 9 -10.5" fill="none" stroke="#222" stroke-width="1.8"/><path d="M8 -14 L13 -10 L8 -6.5 Z" fill="#222"/></g>
<g transform="translate(897 58.2) scale(1)"><rect x="-13.2" y="-13.2" width="26.4" height="26.4" fill="url(#ag)"/><path d="M-9 -4 H1 M-4 -4 V3 M-9 3 H5 M-9 3 V8 M-2 3 V8 M5 3 V8" fill="none" stroke="#fff" stroke-width="1"/><circle cx="-9" cy="-4" r="1.5" fill="#fff"/><circle cx="2" cy="-4" r="2" fill="#fff"/><circle cx="-9" cy="9" r="1.6" fill="#fff"/><circle cx="-2" cy="9" r="1.6" fill="#fff"/><circle cx="5" cy="9" r="1.6" fill="#fff"/><path d="M3.5 -8 A4.5 4.5 0 0 1 7 -4.5 M3.5 -10.5 A7 7 0 0 1 9.5 -4.5 M3.5 -13 A9.5 9.5 0 0 1 12 -4.5" fill="none" stroke="#fff" stroke-width="1.1"/></g>
<g transform="translate(984.3 57) scale(0.93)"><circle cx="-1" cy="-1" r="12" fill="#a9d7ea"/><circle cx="-1" cy="-5" r="4.3" fill="#fff"/><path d="M-9.5 7.5 A8.5 8 0 0 1 7.5 7.5 A11 11 0 0 1 -9.5 7.5Z" fill="#fff"/><circle cx="-3" cy="7" r="1.6" fill="none" stroke="#a9d7ea" stroke-width=".8"/><circle cx="0" cy="7" r="1.6" fill="none" stroke="#a9d7ea" stroke-width=".8"/><circle cx="6.5" cy="7" r="5.6" fill="#2fa84f" stroke="#fff" stroke-width=".8"/><path d="M3.8 7 L5.8 9.2 L9.4 4.8" fill="none" stroke="#fff" stroke-width="1.5"/></g>
</svg>
<svg id="misc" width="1024" height="750" viewBox="0 0 1024 750">
<g transform="translate(19.8 21.6) scale(1.05)"><path d="M-10 -9.3 L-2.2 -10.8 L1.6 9 L-6.4 11 Z" fill="rgba(190,220,250,.45)" stroke="#e3effc" stroke-width="0.9" stroke-linejoin="round"/><path d="M-9.2 -5.2L-1.4 -6.8M-8.3 -1L-.6 -2.7M-7.6 3.2L.2 1.5M-6.9 7.2L1 5.4M-7.4 -9.8L-3.7 10.3M-4.8 -10.3L-1.1 9.7" stroke="#e3effc" stroke-width="0.675" fill="none"/><path d="M-11.5 -2 Q-12 3 -9.5 7" stroke="#e3effc" stroke-width="0.72" fill="none"/><path d="M-8.6 6 L-8 13.5" stroke="#e3effc" stroke-width="0.9"/><circle cx="-2.2" cy="-.3" r="2.7" fill="#fff"/><path d="M0 -1.6 L12 -5.4 M.4 -.1 L12.6 .2 M0 1.4 L12 4.8" stroke="#fff" stroke-width="1.35" stroke-dasharray="2.4 1"/></g>
<rect x="45" y="6.5" width="10.5" height="10.5" fill="#111"/><rect x="47" y="7" width="6.5" height="4.3" fill="#fff"/><rect x="47.5" y="13" width="5.5" height="3.5" fill="#b8a800"/><rect x="51.4" y="13.6" width="1.3" height="2.3" fill="#fff"/><path d="M45.5 7V16.5H55" fill="none" stroke="#b8a800" stroke-width="1"/>
<path d="M75.5 16.5 Q77.5 10 68 10" fill="none" stroke="#9b9b9b" stroke-width="1.6"/><path d="M70 6.5 L65.5 10 L70 13" fill="none" stroke="#9b9b9b" stroke-width="1.6"/>
<path d="M84.5 16.5 Q82.5 10 92 10" fill="none" stroke="#9b9b9b" stroke-width="1.6"/><path d="M90 6.5 L94.5 10 L90 13" fill="none" stroke="#9b9b9b" stroke-width="1.6"/>
<path d="M103.5 9.5 L107 6.5 L114 8.5 L115.5 15 L111.5 17 L105 14.5 Z" fill="#fff" stroke="#111" stroke-width="1.2" stroke-linejoin="round"/><path d="M103.5 9.5 L110.5 11.5 L111.5 17 M110.5 11.5 L114 8.5" fill="none" stroke="#111" stroke-width="1"/><rect x="111.5" y="12" width="3" height="3.5" fill="#333"/><circle cx="113.5" cy="11" r=".7" fill="#d33"/>
<path d="M916.5 11.5 H925.5" stroke="#fff" stroke-width="1"/><rect x="957" y="6.5" width="8.5" height="8.5" fill="none" stroke="#fff" stroke-width="1"/><path d="M996.5 6.5 L1005.5 15.5 M1005.5 6.5 L996.5 15.5" stroke="#fff" stroke-width="1.2"/>
<path d="M802 37.5 V32 L804 27.5 H806 V37.5 Z M809 37.5 V27.5 H811 L813 32 V37.5 Z" fill="#111"/><rect x="805.5" y="29.5" width="4" height="4" fill="#111"/>
<path d="M822 25.5 V39" stroke="#9a9a9a" stroke-width="1"/><path d="M823 25.5 V39" stroke="#e8e8e8" stroke-width="1"/>
<circle cx="836.3" cy="30.9" r="5.2" fill="#fff" stroke="#222" stroke-width="1.2"/><path d="M840 34.9 L843.3 38.4" stroke="#222" stroke-width="2"/><path d="M831.3 33.9 A5.5 5.5 0 0 1 834.8 25.4" fill="none" stroke="#1733c8" stroke-width="2"/><path d="M828.3 33.4 l2.5 4 l2.5 -3z" fill="#1733c8"/>
<circle cx="855.9" cy="30.9" r="5.2" fill="#fff" stroke="#222" stroke-width="1.2"/><path d="M859.6 34.9 L862.9 38.4" stroke="#222" stroke-width="2"/><path d="M855.9 29.4 v-4 M855.9 32.4 v4 M854.4 30.9 h-4 M857.4 30.9 h4" stroke="#1733c8" stroke-width="1.6"/>
<circle cx="875.9" cy="30.9" r="5.2" fill="#fff" stroke="#222" stroke-width="1.2"/><path d="M879.6 34.9 L882.9 38.4" stroke="#222" stroke-width="2"/><text x="875.9" y="32.9" font-size="5.5" font-family="Liberation Sans, sans-serif" fill="#1733c8" text-anchor="middle">x2</text>
<path d="M899 26.4 A6 6 0 1 0 901.5 32.9" fill="none" stroke="#1733c8" stroke-width="1.8"/><path d="M898 23.4 l4.5 -1 l-1.5 4.5z" fill="#1733c8"/>
<path d="M894 34.9 l6 -4 l2 2.5 l-6 4z" fill="#e8b830" stroke="#7a5a10" stroke-width=".7"/>
<rect x="908" y="30.4" width="8" height="8" fill="none" stroke="#1733c8" stroke-width=".9" stroke-dasharray="1.5 1"/>
<circle cx="916.5" cy="29.4" r="3.8" fill="#fff" stroke="#222" stroke-width="1.1"/><path d="M919 32.4 l4 4" stroke="#222" stroke-width="1.8"/>
<path d="M932.5 33.9 v-7 a1 1 0 0 1 2 0 v-2 a1 1 0 0 1 2 0 v1 a1 1 0 0 1 2 0 v2 a1 1 0 0 1 2 0 v6 q0 5 -4 5 h-2 q-2 0 -4 -3 l-3 -4 q1 -2 3 0z" fill="#fff" stroke="#222" stroke-width="1" stroke-linejoin="round" transform="translate(935.5 31.9) scale(.82) translate(-935.5 -31.9)"/>
<rect x="949" y="25.9" width="12" height="11" fill="#fff" stroke="#222" stroke-width="1"/><rect x="949" y="25.9" width="12" height="2.5" fill="#2aa0d0"/><rect x="954.5" y="30.9" width="7" height="7" fill="#fff" stroke="#1733c8" stroke-width=".9"/><path d="M951.5 29.4 l4 4 m0 -3 v3 h-3" fill="none" stroke="#1733c8" stroke-width="1"/>
<path d="M969.5 25.5 V39" stroke="#9a9a9a" stroke-width="1"/><path d="M970.5 25.5 V39" stroke="#e8e8e8" stroke-width="1"/>
<circle cx="982" cy="32" r="6.3" fill="url(#gg)" stroke="#123a8a" stroke-width=".8"/><path d="M978 29 q3 -3 5 0 q2 3 -1 5 q-3 1 -4 -2z" fill="#8fd0f0" opacity=".8"/><path d="M990.5 32 h4 l-2 2.4z" fill="#333"/>
<path d="M1000 33 L1008 27 L1015 30 L1007 37 Z" fill="#a02a8a" stroke="#4a1040" stroke-width=".8"/><path d="M1000 33 V36 L1007 40 L1015 33 V30 L1007 37Z" fill="#e8d8b0" stroke="#4a1040" stroke-width=".8"/><path d="M1003 32 L1008.5 28.5" stroke="#f0d040" stroke-width="1.2"/><path d="M1017 32 h3.4 l-1.7 2.2z" fill="#333"/>
<defs><radialGradient id="gg" cx=".35" cy=".35" r=".7"><stop offset="0" stop-color="#6fc0f0"/><stop offset="1" stop-color="#0b3fa8"/></radialGradient></defs>
<path d="M14.8 142.4 H26.3 M20.55 136.8 V148" stroke="#333" stroke-width="1.4"/>
<path d="M33.5 148 L35 143.5 L42.5 136 L45.3 138.8 L37.8 146.3 Z" fill="#f2c838" stroke="#8a7a40" stroke-width=".8" stroke-linejoin="round"/><path d="M33.5 148 L35 143.5 L37.8 146.3Z" fill="#f4f0e8" stroke="#777" stroke-width=".6"/><path d="M33.5 148 l.6 -1.8 l1.2 1.2z" fill="#333"/>
<rect x="56.5" y="136.5" width="8" height="8" fill="#fff" stroke="#999" stroke-width="1"/><rect x="52.5" y="140.5" width="8" height="8" fill="#c9c9c9" stroke="#999" stroke-width="1"/>
<path d="M72.5 137.2 L82 147 M82 137.2 L72.5 147" stroke="#d6464f" stroke-width="2"/>
<path d="M91.2 134 V150.5" stroke="#d0d0d0" stroke-width="1"/>
<path d="M138 134 V150.5" stroke="#d0d0d0" stroke-width="1"/>
<path d="M209.6 134 V150.5" stroke="#d0d0d0" stroke-width="1"/>
<path d="M99.5 144.6 L104.8 138.8 L110.1 144.6 Z" fill="#333"/><path d="M118.5 139.4 L123.8 145.2 L129.1 139.4 Z" fill="#333"/>
<path d="M145 137 H156 L158 138.6 V148.6 H147 L145 147 Z" fill="#fff" stroke="#333" stroke-width="1" stroke-linejoin="round"/><path d="M156 137 V147 H145" fill="none" stroke="#333" stroke-width=".8"/>
<text x="146.2" y="141.7" font-size="4.2" font-weight="bold" fill="#666" font-family="Liberation Sans, sans-serif" textLength="8.6" lengthAdjust="spacingAndGlyphs">DXF</text><text x="146.2" y="146" font-size="4.2" font-weight="bold" fill="#666" font-family="Liberation Sans, sans-serif" textLength="8.6" lengthAdjust="spacingAndGlyphs">DWG</text>
<text x="163.5" y="140.5" font-size="4.6" font-weight="bold" fill="#c01818" font-family="Liberation Sans, sans-serif" textLength="9">DXF</text><text x="163.5" y="148.6" font-size="4.6" font-weight="bold" fill="#c01818" font-family="Liberation Sans, sans-serif" textLength="9">DWG</text>
<path d="M163 143 H176 M171.5 136 V149 M173.5 138h3M173.5 140h3M173.5 145h3M173.5 147h3" stroke="#222" stroke-width="1"/><path d="M166 145 L172 139" stroke="#c01818" stroke-width=".9"/>
<path d="M218.4 144.3 L222.9 139.5 L227.4 144.3 Z" fill="#111"/><path d="M236.5 141 L241.2 145.9 L245.9 141 Z" fill="#111"/>
<path d="M267.6 144.8 L275.6 136.8" stroke="#333" stroke-width="1.7"/><path d="M278.3 136.6 A2.3 2.3 0 1 1 276 134.1" fill="none" stroke="#333" stroke-width="1.5"/>
<path d="M268.4 135.2 L273.6 140.4" stroke="#333" stroke-width="1.1"/><path d="M273.6 140.4 L277.8 144.6" stroke="#333" stroke-width="2.5" stroke-linecap="round"/>
<path d="M268.7 163 V157 A4.2 4.2 0 0 1 277.1 157 V163" fill="none" stroke="#d01818" stroke-width="3"/><path d="M268.7 161.5 V163.6 M277.1 161.5 V163.6" stroke="#eee" stroke-width="3"/><path d="M267.2 164 h3 M275.6 164 h3" stroke="#333" stroke-width=".8"/>
<rect x="268.3" y="170.9" width="9.4" height="9.2" fill="none" stroke="#3a3a3a" stroke-width="1.5"/>
<path d="M270.3 186.5 V199.5 M275.5 186.5 V199.5 M266.4 190.5 H279.4 M266.4 195.7 H279.4" stroke="#444" stroke-width="1"/>
<rect x="268.4" y="207.1" width="9.4" height="9.4" fill="none" stroke="#444" stroke-width=".9" stroke-dasharray="1 2.13"/><rect x="270.9" y="209.8" width="4" height="4" fill="none" stroke="#444" stroke-width=".9"/>
<rect x="266.6" y="226.5" width="12.6" height="6" fill="#555" stroke="#333" stroke-width=".8"/><path d="M268.9 227v2.5M271.4 227v2.5M273.9 227v2.5M276.4 227v2.5M268.4 231h9" stroke="#eee" stroke-width=".8"/>
<rect x="266.7" y="242.5" width="12.4" height="6.2" fill="#fff" stroke="#333" stroke-width=".9"/><text x="272.9" y="247.6" font-size="4.6" text-anchor="middle" font-family="Liberation Sans, sans-serif" fill="#222">1.00</text><path d="M266.7 252 H279.1 M266.7 250.3 v3.4 M279.1 250.3 v3.4" stroke="#333" stroke-width=".8"/>
<path d="M269.4 260.5 V272 H278.9" fill="none" stroke="#333" stroke-width="1.1"/><path d="M269.4 266.5 A5.5 5.5 0 0 1 275.1 272" fill="none" stroke="#333" stroke-width=".9"/><circle cx="272.1" cy="269.3" r=".7" fill="#333"/>
<circle cx="272.6" cy="283.8" r="5.6" fill="none" stroke="#444" stroke-width="1"/><path d="M272.6 283.8 L276.5 280 M278.2 283.8 h2" stroke="#444" stroke-width=".9"/>
<rect x="268.5" y="300" width="9.6" height="8.6" fill="none" stroke="#222" stroke-width="1" stroke-dasharray="1.8 1.2"/><path d="M270.5 303.3 h5 M273.4 305.6 h3" stroke="#e07830" stroke-width="1.2"/><path d="M266.9 297 h4 M272.4 297 h3" stroke="#555" stroke-width="1.2"/>
<rect x="126.8" y="554.8" width="1" height="1" fill="#777"/>
<rect x="258.6" y="428" width="1" height="1" fill="#777"/>
<rect x="129.7" y="554.8" width="1" height="1" fill="#777"/>
<rect x="258.6" y="430.9" width="1" height="1" fill="#777"/>
<rect x="132.6" y="554.8" width="1" height="1" fill="#777"/>
<rect x="258.6" y="433.8" width="1" height="1" fill="#777"/>
<rect x="135.5" y="554.8" width="1" height="1" fill="#777"/>
<rect x="258.6" y="436.7" width="1" height="1" fill="#777"/>
<path d="M44.7 559 V576" stroke="#f2f2f2" stroke-width="1"/><path d="M43.7 559 V576" stroke="#a8a8a8" stroke-width=".8"/>
<path d="M140.5 559 V576" stroke="#f2f2f2" stroke-width="1"/><path d="M139.5 559 V576" stroke="#a8a8a8" stroke-width=".8"/>
<path d="M218.6 559 V576" stroke="#f2f2f2" stroke-width="1"/><path d="M217.6 559 V576" stroke="#a8a8a8" stroke-width=".8"/>
<path d="M242 559 V576" stroke="#f2f2f2" stroke-width="1"/><path d="M241 559 V576" stroke="#a8a8a8" stroke-width=".8"/>
<circle cx="15" cy="568" r="5.6" fill="none" stroke="#9ab8e8" stroke-width="1" opacity=".7"/>
<text x="15" y="573.2" font-size="8" font-weight="bold" text-anchor="middle" font-family="Liberation Sans, sans-serif" fill="#fff" stroke="#1a3f9f" stroke-width="1.7" paint-order="stroke" textLength="10" lengthAdjust="spacingAndGlyphs">3D</text><path d="M10.3 566 A5.2 5 0 0 1 16.2 562.6" fill="none" stroke="#2a63c8" stroke-width="1.3"/><path d="M15 560.6 l3 2.2 l-3.4 1.6z" fill="#2a63c8"/>
<path d="M26.3 569 H35.3 L39.3 573 H30.3 Z" fill="#fff" stroke="#222" stroke-width="1" stroke-linejoin="round"/>
<path d="M26.3 565.7 H35.3 L39.3 569.7 H30.3 Z" fill="#fff" stroke="#222" stroke-width="1" stroke-linejoin="round"/>
<path d="M26.3 562.3 H35.3 L39.3 566.3 H30.3 Z" fill="#86d2ee" stroke="#222" stroke-width="1" stroke-linejoin="round"/>
<path d="M54.7 562 V568.7 L50.3 573.3 M54.7 568.7 L61.7 572.5" fill="none" stroke="#4a8099" stroke-width="1.4"/>
<path d="M68.2 563 L73.8 561.2 L79.4 563 V571.5 L73.8 574.8 L68.2 571.5 Z" fill="#bfe3f2" stroke="#1a4a78" stroke-width="1" stroke-linejoin="round"/><path d="M68.2 563 L73.8 565 L79.4 563 M73.8 565 V574.8" fill="none" stroke="#1a4a78" stroke-width=".9"/>
<path d="M88 564.5 L91 561.5 H97.5 V568 L94.5 571 H88 Z" fill="#cfe0f0" stroke="#333" stroke-width="1" stroke-linejoin="round"/><path d="M88 564.5 H94.5 V571 M94.5 564.5 L97.5 561.5" fill="none" stroke="#333" stroke-width=".8"/><path d="M87.5 570 A4 3.4 0 0 0 93 574.5" fill="none" stroke="#333" stroke-width="1"/><path d="M92 572.5 l2.4 2 l-3 1.2z" fill="#333"/>
<circle cx="110.5" cy="566.3" r="2.9" fill="#111"/><ellipse cx="110.7" cy="568.3" rx="6.3" ry="3.2" fill="none" stroke="#222" stroke-width="1.1"/><path d="M115 572 l2.8 -.6 l-1 2.6z" fill="#222"/>
<circle cx="129.2" cy="562.2" r="1.7" fill="none" stroke="#222" stroke-width="1"/><path d="M129.2 564 V572" stroke="#222" stroke-width="1.1"/><ellipse cx="129.2" cy="570" rx="6.4" ry="3.2" fill="none" stroke="#222" stroke-width="1.1"/><path d="M125.5 573.2 l2.6 -.4 l-1.4 2.4z" fill="#222"/>
<rect x="147" y="562" width="9.6" height="11" fill="#bfe3f2" stroke="#222" stroke-width="1"/><rect x="152.5" y="562" width="4.1" height="11" fill="#f6b8b8" stroke="#e02020" stroke-width="1.1"/><path d="M151.8 560.5 V575" stroke="#222" stroke-width=".9" stroke-dasharray="1.5 1"/>
<rect x="165" y="562" width="10" height="11" fill="#bfe3f2" stroke="#222" stroke-width="1"/><path d="M165 573 L175 562 V562 H165Z" fill="#30d048"/><path d="M163.5 574.5 L176.5 560.5" stroke="#222" stroke-width="1"/>
<rect x="183" y="562" width="9.6" height="11" fill="#bfe3f2" stroke="#2020a0" stroke-width="1"/><rect x="183" y="562" width="9.6" height="4.6" fill="#c8c0f0"/><path d="M181.5 566.8 H194" stroke="#111" stroke-width="1" stroke-dasharray="1.6 1"/><rect x="183" y="562" width="9.6" height="11" fill="none" stroke="#2020a0" stroke-width="1"/>
<path d="M199.2 567.8 Q206.2 560.5 213.2 567.8 Q206.2 574.5 199.2 567.8Z" fill="#111"/><circle cx="206.2" cy="567.6" r="2.3" fill="#fff"/><circle cx="206.2" cy="567.6" r="1.2" fill="#111"/><path d="M201 573.5 L211.5 561.5" stroke="#111" stroke-width="1.1"/>
<text x="227.5" y="566" font-size="6.4" font-weight="bold" text-anchor="middle" font-family="Liberation Sans, sans-serif" fill="#333">3D</text><circle cx="229" cy="570.5" r="3.6" fill="#f4f4f4" stroke="#888" stroke-width="1" stroke-dasharray="1.4 1"/>
<rect x="245.8" y="566.5" width="6" height="8.5" fill="#a8c0d8" stroke="#8aa0b8" stroke-width=".6"/><circle cx="251.5" cy="566" r="4.3" fill="#eef2f6" stroke="#666" stroke-width="1.1"/><path d="M254.3 569.3 l2.2 2.6" stroke="#222" stroke-width="1.6"/>
<path d="M79.1 637.2 L130.5 662.3 L130.5 731.3 L88.3 693.9 Z" fill="#b1b7bb"/>
<path d="M130.5 662.3 L181.9 628.5 L178.0 686.5 L130.5 731.3 Z" fill="#d4d5d6"/>
<path d="M130.5 676.1 L181.1 640.1" stroke="#f4f4f4" stroke-width=".7"/>
<path d="M130.5 689.9 L180.3 651.7" stroke="#f4f4f4" stroke-width=".7"/>
<path d="M130.5 703.7 L179.5 663.3" stroke="#f4f4f4" stroke-width=".7"/>
<path d="M130.5 717.5 L178.8 674.9" stroke="#f4f4f4" stroke-width=".7"/>
<path d="M165.6 633.3 L165.0 642.5" stroke="#b4622a" stroke-width="1"/>
<path d="M174.5 642.5 L174.0 649.1" stroke="#b4622a" stroke-width="1"/>
<path d="M172.7 655.7 L172.2 662.8" stroke="#b4622a" stroke-width="1"/>
<path d="M171.4 668.1 L170.8 674.9" stroke="#b4622a" stroke-width="1"/>
<path d="M169.5 678.1 L169.0 683.9" stroke="#b4622a" stroke-width="1"/>
<path d="M146.3 649.1 L145.8 654.4" stroke="#b4622a" stroke-width="1"/>
<path d="M144.5 675.5 L143.9 682.8" stroke="#b4622a" stroke-width="1"/>
<path d="M142.4 707.1 L141.8 716.3" stroke="#b4622a" stroke-width="1"/>
<path d="M159.2 676.8 L158.7 682.0" stroke="#b4622a" stroke-width="1"/>
<path d="M157.7 688.6 L157.1 693.9" stroke="#b4622a" stroke-width="1"/>
<path d="M165.3 628.5 L164.2 641.7" stroke="#8c4a1e" stroke-width="1.3"/>
<path d="M162.7 646.5 L161.6 657.5" stroke="#8c4a1e" stroke-width="1.3"/>
<path d="M160.3 661.7 L159.2 673.3" stroke="#8c4a1e" stroke-width="1.3"/>
<path d="M158.2 676.5 L157.1 686.0" stroke="#8c4a1e" stroke-width="1.3"/>
<path d="M172.7 635.9 L181.9 634.6 L181.9 639.9 L174.0 641.7 Z" fill="#8f999f"/>
<path d="M171.4 675.5 L179.8 672.8 L179.8 676.8 L171.4 680.7 Z" fill="#8f999f"/>
<path d="M80.4 650.4 L96.2 657.0 L96.2 661.7 L80.4 654.1 Z" fill="#69777f"/>
<path d="M83.0 661.0 L98.1 668.1 L98.1 672.8 L83.0 664.6 Z" fill="#69777f"/>
<path d="M84.9 672.3 L100.2 679.1 L100.2 683.9 L84.9 676.0 Z" fill="#69777f"/>
<path d="M87.0 683.4 L102.3 690.7 L102.3 695.5 L87.0 687.1 Z" fill="#69777f"/>
<path d="M101.5 664.9 L126.0 676.0 L126.0 680.7 L101.5 668.6 Z" fill="#69777f"/>
<path d="M103.3 677.6 L126.5 688.1 L126.5 692.9 L103.3 681.3 Z" fill="#69777f"/>
<path d="M104.9 689.2 L127.1 700.5 L127.1 705.2 L104.9 692.9 Z" fill="#69777f"/>
<path d="M106.8 699.7 L127.6 711.8 L127.6 716.6 L106.8 703.4 Z" fill="#69777f"/>
<path d="M84.4 645.1 L88.1 647.0 L88.1 652.3 L84.4 650.4 Z" fill="#e8ecef"/>
<path d="M91.0 648.0 L94.6 649.9 L94.6 655.2 L91.0 653.3 Z" fill="#e8ecef"/>
<path d="M99.7 653.8 L103.3 655.7 L103.3 661.0 L99.7 659.1 Z" fill="#e8ecef"/>
<path d="M108.1 658.3 L111.8 660.2 L111.8 665.4 L108.1 663.6 Z" fill="#e8ecef"/>
<path d="M116.0 662.3 L119.7 664.1 L119.7 669.4 L116.0 667.5 Z" fill="#e8ecef"/>
<path d="M118.1 663.6 L123.4 666.2 L123.4 669.7 L118.6 667.5 Z" fill="#9a1a6a"/>
<path d="M110.7 707.1 L117.3 711.0 L117.3 719.0 L110.7 714.5 Z" fill="#8a8f93"/>
<path d="M71.7 632.0 L103.3 613.0 L123.9 612.2 L181.9 626.7 L181.9 629.6 L131.0 662.8 L129.2 662.3 Z" fill="#5c6b76"/>
<path d="M103.3 613.0 L123.9 612.2 L181.9 626.7 L168.7 631.2 Z" fill="#53626d"/>
<path d="M71.7 632.0 L129.2 662.3 L131.0 662.8 L131.0 664.4 L71.7 633.5 Z" fill="#6f7d87"/>
<path d="M87.3 625.9 L90.2 623.8 L92.3 625.1 L89.4 627.5 Z" fill="#8fb0c2"/>
<path d="M99.1 630.1 L102.0 628.0 L104.1 629.3 L101.2 631.7 Z" fill="#8fb0c2"/>
<path d="M113.6 636.4 L116.5 634.3 L118.6 635.6 L115.7 638.0 Z" fill="#8fb0c2"/>
<path d="M132.6 643.8 L135.5 641.7 L137.6 643.0 L134.7 645.4 Z" fill="#8fb0c2"/>
<circle cx="110.7" cy="627.2" r=".6" fill="#c8642a"/>
<circle cx="119.2" cy="631.2" r=".6" fill="#c8642a"/>
<circle cx="94.9" cy="637.8" r=".6" fill="#c8642a"/>
<circle cx="146.3" cy="640.1" r=".6" fill="#c8642a"/>
<circle cx="129.2" cy="653.8" r=".6" fill="#c8642a"/>
<circle cx="92.0" cy="711.3" r="1.3" fill="#222"/>
<path d="M92.8 710.5 L105.5 703.1" stroke="#e8e8e8" stroke-width=".6"/>
<path d="M19.0 707.9 L19.0 692.5" stroke="#1818f0" stroke-width="1.2"/><path d="M19.0 688.5 l-2 5 h4z" fill="#1818f0"/>
<path d="M19.0 707.9 L31.7 702.0" stroke="#20e030" stroke-width="1.2"/><path d="M34.7 700.4 l-4.6 -.4 l2 3.8z" fill="#10b020"/>
<path d="M19.0 707.9 L31.8 713.6" stroke="#c02020" stroke-width="1.1" stroke-dasharray="1.6 .8"/><path d="M35.4 715.4 l-4.8 -.6 l2.2 -3.6z" fill="#c01010"/>
</svg>
<svg id="plan" width="1024" height="750" viewBox="0 0 1024 750" font-family="Liberation Sans, sans-serif">
<g fill="none" stroke="#8e8e8e" stroke-width="1">
<path d="M561.25 166 L647.5 166 L647.5 364.25 L615 364.25 L615 393.75 L561.25 393.75 Z"/>
<path d="M654.5 166 L740 166 L740 393.75 L686.75 393.75 L686.75 364.25 L654.5 364.25 Z"/>
<path d="M386.4 237.5 L473.5 237.5 L473.5 358.75 L437.4 358.75 L437.4 371.25 L386.4 371.25 Z"/>
<path d="M478.4 237.5 L556.75 237.5 L556.75 369.6 L514.8 369.6 L514.8 358.75 L478.4 358.75 Z"/>
<path d="M744.5 235 L822.5 235 L822.5 358.75 L786.25 358.75 L786.25 369.6 L744.5 369.6 Z"/>
<path d="M827.5 235 L914.5 235 L914.5 371.25 L863.75 371.25 L863.75 358.75 L827.5 358.75 Z"/>
<path d="M442.4 443.2 L497.2 443.2 L497.2 539.25 L483.25 539.25 L483.25 674.25 L386.4 674.25 L386.4 544.25 L442.4 544.25 Z"/>
<path d="M858.75 443.2 L803.75 443.2 L803.75 539.25 L817.5 539.25 L817.5 674.25 L914.8 674.25 L914.8 544.25 L858.75 544.25 Z"/>
<path d="M514.8 374.6 L556.75 374.6 L556.75 399.25 L615 399.25 L615 427 L608 427 L608 674.25 L488.25 674.25 L488.25 544.25 L502.6 544.25 L502.6 443.2 L514.8 443.2 Z"/>
<path d="M786.25 374.6 L744.5 374.6 L744.5 399.25 L686.75 399.25 L686.75 427 L693.1 427 L693.1 674.25 L812.5 674.25 L812.5 544.25 L798.75 544.25 L798.75 443.2 L786.25 443.2 Z"/>
<path d="M615.2 434.5 L686.75 434.5 L686.75 477.5 L672.4 477.5 L672.4 520.4 L686.75 520.4 L686.75 674.25 L615.2 674.25 L615.2 520.4 L628.2 520.4 L628.2 477.5 L615.2 477.5 Z"/>
<rect x="442.4" y="363.4" width="67.6" height="74.4"/>
<rect x="790.75" y="363.4" width="68" height="74.4"/>
<rect x="386.4" y="376.2" width="51" height="75.8"/>
<rect x="386.4" y="457" width="51" height="5.5"/>
<rect x="386.4" y="467.5" width="51" height="71.75"/>
<rect x="863.25" y="376.2" width="51.25" height="75.8"/>
<rect x="863.25" y="457" width="51.25" height="5.5"/>
<rect x="863.25" y="467.5" width="51.25" height="71.75"/>
<path d="M554 160 L747 160"/>
<path d="M554 231.2 L561.25 231.2"/>
<path d="M740 228 L747.5 228"/>
<path d="M378.6 231 L378.6 681"/>
<path d="M921.6 228 L921.6 681"/>
<path d="M378 680.6 L923 680.6"/>
<path d="M615 364.25 L615 427"/>
<path d="M686.75 364.25 L686.75 427"/>
<path d="M608 427 L693.1 427"/>
<path d="M608 434.5 L693.1 434.5"/>
<path d="M622 427 L622 371.75 L680 371.75 L680 427"/>
<path d="M437.4 358.75 L437.4 452"/>
<path d="M514.8 358.75 L514.8 443.2"/>
<path d="M863.75 358.75 L863.75 452"/>
<path d="M786.25 358.75 L786.25 443.2"/>
<path d="M442.4 437.8 L442.4 443.2"/>
<path d="M858.75 437.8 L858.75 443.2"/>
<path d="M608 674.25 L608 681"/>
<path d="M693.1 674.25 L693.1 681"/>
</g>
<path d="M554 155.5 L747.5 155.5" fill="none" stroke="#ecc9a0" stroke-width="1"/>
<path d="M377.5 231 L377.5 681.4 L402.5 681.4" fill="none" stroke="#ecc9a0" stroke-width="1"/>
<path d="M923 228 L923 681.4 L898.75 681.4" fill="none" stroke="#ecc9a0" stroke-width="1"/>
<path d="M608.4 681.4 L692.5 681.4" fill="none" stroke="#ecc9a0" stroke-width="1"/>
<rect x="377.4" y="155.5" width="176.6" height="75.5" fill="none" stroke="#b06fb6" stroke-width="1"/>
<rect x="747.5" y="155.5" width="176.1" height="72.5" fill="none" stroke="#b06fb6" stroke-width="1"/>
<path d="M402.5 681.2 L608.4 681.2" fill="none" stroke="#b06fb6" stroke-width="1"/>
<path d="M692.5 681.2 L898.75 681.2" fill="none" stroke="#b06fb6" stroke-width="1"/>
<path d="M402.5 681 L403.5 701.25 L543.75 711.5 L608.4 711.5 L608.4 681" fill="none" stroke="#bd86c0" stroke-width="1"/>
<path d="M898.75 681 L897.5 701.25 L758.75 711.5 L692.5 711.5 L692.5 681" fill="none" stroke="#bd86c0" stroke-width="1"/>
<path d="M416.6 231 V237.5 M468 231 V237.5 M416.6 234.25 H468" fill="none" stroke="#3a8cee" stroke-width="1"/>
<path d="M490.5 231 V237.5 M542.5 231 V237.5 M490.5 234.25 H542.5" fill="none" stroke="#3a8cee" stroke-width="1"/>
<path d="M585.5 160 V166 M637 160 V166 M585.5 163 H637" fill="none" stroke="#3a8cee" stroke-width="1"/>
<path d="M675.5 160 V166 M726.75 160 V166 M675.5 163 H726.75" fill="none" stroke="#3a8cee" stroke-width="1"/>
<path d="M757.5 228 V235 M808.5 228 V235 M757.5 231.5 H808.5" fill="none" stroke="#3a8cee" stroke-width="1"/>
<path d="M837.5 228 V235 M888.75 228 V235 M837.5 231.5 H888.75" fill="none" stroke="#3a8cee" stroke-width="1"/>
<path d="M429.25 674.25 V681 M480.5 674.25 V681 M429.25 677.625 H480.5" fill="none" stroke="#3a8cee" stroke-width="1"/>
<path d="M513.75 674.25 V681 M581.75 674.25 V681 M513.75 677.625 H581.75" fill="none" stroke="#3a8cee" stroke-width="1"/>
<path d="M624.5 674.25 V681 M675.5 674.25 V681 M624.5 677.625 H675.5" fill="none" stroke="#3a8cee" stroke-width="1"/>
<path d="M718.75 674.25 V681 M787.5 674.25 V681 M718.75 677.625 H787.5" fill="none" stroke="#3a8cee" stroke-width="1"/>
<path d="M821.75 674.25 V681 M872 674.25 V681 M821.75 677.625 H872" fill="none" stroke="#3a8cee" stroke-width="1"/>
<path d="M554 176.5 H561 M554 210.5 H561 M557.5 176.5 V210.5" fill="none" stroke="#3a8cee" stroke-width="1"/>
<path d="M740 178 H747 M740 213 H747 M743.5 178 V213" fill="none" stroke="#3a8cee" stroke-width="1"/>
<path d="M443.4 358.75 V363.6 M471.6 358.75 V363.6 M443.4 361.175 H471.6" fill="none" stroke="#e48a30" stroke-width="1"/>
<path d="M481.7 358.75 V363.6 M509.2 358.75 V363.6 M481.7 361.175 H509.2" fill="none" stroke="#e48a30" stroke-width="1"/>
<path d="M444.4 437.8 V443.2 M472.4 437.8 V443.2 M444.4 440.5 H472.4" fill="none" stroke="#e48a30" stroke-width="1"/>
<path d="M573.25 393.75 V399.25 M600.5 393.75 V399.25 M573.25 396.5 H600.5" fill="none" stroke="#e48a30" stroke-width="1"/>
<path d="M702.5 393.75 V399.25 M730 393.75 V399.25 M702.5 396.5 H730" fill="none" stroke="#e48a30" stroke-width="1"/>
<path d="M829.5 358.75 V363.6 M857 358.75 V363.6 M829.5 361.175 H857" fill="none" stroke="#e48a30" stroke-width="1"/>
<path d="M828.75 437.8 V443.2 M856.25 437.8 V443.2 M828.75 440.5 H856.25" fill="none" stroke="#e48a30" stroke-width="1"/>
<path d="M437.4 402.7 H442.4 M437.4 429.7 H442.4 M439.9 402.7 V429.7" fill="none" stroke="#e48a30" stroke-width="1"/>
<path d="M510 403.3 H514.8 M510 430.6 H514.8 M512.4 403.3 V430.6" fill="none" stroke="#e48a30" stroke-width="1"/>
<path d="M786.25 403.25 H790.75 M786.25 430 H790.75 M788.5 403.25 V430" fill="none" stroke="#e48a30" stroke-width="1"/>
<path d="M858.75 401.75 H863.75 M858.75 428.75 H863.75 M861.25 401.75 V428.75" fill="none" stroke="#e48a30" stroke-width="1"/>
<path d="M437.4 484.25 H442.4 M437.4 511.25 H442.4 M439.9 484.25 V511.25" fill="none" stroke="#e48a30" stroke-width="1"/>
<path d="M858.75 480.5 H863.25 M858.75 508 H863.25 M861 480.5 V508" fill="none" stroke="#e48a30" stroke-width="1"/>
<path d="M608.4 441.2 H615.2 M608.4 482 H615.2 M611.8 441.2 V482" fill="none" stroke="#e48a30" stroke-width="1"/>
<path d="M686.75 440 H693.1 M686.75 481 H693.1 M689.925 440 V481" fill="none" stroke="#e48a30" stroke-width="1"/>
<path d="M629.25 427 V434.5 M657.5 427 V434.5" stroke="#e48a30" stroke-width="1"/>
<rect x="378" y="186.5" width="10.8" height="13.5" fill="none" stroke="#f6d27c" stroke-width="1"/>
<rect x="558" y="187" width="10.8" height="13.7" fill="none" stroke="#f6d27c" stroke-width="1"/>
<rect x="732.5" y="186.5" width="10" height="13.5" fill="none" stroke="#f6d27c" stroke-width="1"/>
<rect x="909.5" y="186.5" width="11" height="13.5" fill="none" stroke="#f6d27c" stroke-width="1"/>
<rect x="378" y="358.75" width="11.5" height="13.75" fill="none" stroke="#f6d27c" stroke-width="1"/>
<rect x="911.5" y="358.75" width="11" height="13.25" fill="none" stroke="#f6d27c" stroke-width="1"/>
<rect x="378" y="541.75" width="11.5" height="14" fill="none" stroke="#f6d27c" stroke-width="1"/>
<rect x="911.5" y="540" width="11" height="13.75" fill="none" stroke="#f6d27c" stroke-width="1"/>
<rect x="598.8" y="541" width="9.2" height="14" fill="none" stroke="#f6d27c" stroke-width="1"/>
<rect x="690.8" y="541" width="9.8" height="13" fill="none" stroke="#f6d27c" stroke-width="1"/>
<rect x="378" y="667.5" width="11.5" height="13.5" fill="none" stroke="#f6d27c" stroke-width="1"/>
<rect x="911.5" y="667.5" width="11.5" height="13.5" fill="none" stroke="#f6d27c" stroke-width="1"/>
<rect x="600.5" y="666.25" width="10" height="13" fill="none" stroke="#f6d27c" stroke-width="1"/>
<rect x="689.5" y="667" width="10" height="13" fill="none" stroke="#f6d27c" stroke-width="1"/>
<rect x="618.75" y="368" width="65" height="63.5" fill="none" stroke="#e34fc0" stroke-width="1.1"/>
<rect x="615.6" y="482.3" width="11.8" height="33.1" fill="none" stroke="#e34fc0" stroke-width="1"/>
<rect x="674.6" y="482.3" width="12" height="33.1" fill="none" stroke="#e34fc0" stroke-width="1"/>
<path d="M612.4 675 L612.4 554.2 L690.2 554.2 L690.2 675" fill="none" stroke="#e34fc0" stroke-width="1"/>
<path d="M612.4 671.3 L690.2 671.3" fill="none" stroke="#e34fc0" stroke-width="1"/>
<path d="M481.5 315.5 L607.2 527.2" fill="none" stroke="#c4207f" stroke-width="1.25"/>
<path d="M477.2 327.8 L605.4 527.2" fill="none" stroke="#c4207f" stroke-width="1.25"/>
<path d="M561.6 328 L608.7 527.2" fill="none" stroke="#c4207f" stroke-width="1.25"/>
<path d="M562.4 328 L609.5 527.2" fill="none" stroke="#c4207f" stroke-width="1.25"/>
<path d="M488 587.2 L603 537.4" fill="none" stroke="#c4207f" stroke-width="1.6"/>
<path d="M609.2 541 L609.2 593" fill="none" stroke="#c4207f" stroke-width="1.25"/>
<path d="M820.2 317.5 L694.8 527.2" fill="none" stroke="#c4207f" stroke-width="1.25"/>
<path d="M824.6 328 L696.6 527.2" fill="none" stroke="#c4207f" stroke-width="1.25"/>
<path d="M739.4 328 L692.2 527.2" fill="none" stroke="#c4207f" stroke-width="1.25"/>
<path d="M738.6 328 L691.4 527.2" fill="none" stroke="#c4207f" stroke-width="1.25"/>
<path d="M814 585.8 L698.8 537.4" fill="none" stroke="#c4207f" stroke-width="1.6"/>
<path d="M692.3 541 L692.3 593" fill="none" stroke="#c4207f" stroke-width="1.25"/>
<path d="M624 508.7 L684.4 531" fill="none" stroke="#f09a1a" stroke-width="1.6"/>
<path d="M614.8 513.4 L611.4 527" fill="none" stroke="#f09a1a" stroke-width="1.6"/>
<text x="475.2" y="303.8" font-size="2.6" fill="#6a4fae">P3</text><text x="475.7" y="307.2" font-size="2.6" fill="#6f86d6">100x75x40 mm</text><rect x="475.95" y="309.15" width="5.5" height="5.5" fill="#fff" stroke="#10108c" stroke-width="1.5"/><path d="M478.14 310.4 V313.9 M479.54 310.4 V313.9" stroke="#8890d0" stroke-width=".7"/>
<text x="471" y="316.3" font-size="2.6" fill="#6a4fae">P3</text><text x="471.5" y="319.7" font-size="2.6" fill="#6f86d6">100x75x40 mm</text><rect x="471.75" y="321.65" width="5.5" height="5.5" fill="#fff" stroke="#10108c" stroke-width="1.5"/><path d="M473.94 322.9 V326.4 M475.34 322.9 V326.4" stroke="#8890d0" stroke-width=".7"/>
<text x="557.4" y="316.3" font-size="2.6" fill="#6a4fae">P3</text><text x="557.9" y="319.7" font-size="2.6" fill="#6f86d6">100x75x40 mm</text><rect x="558.15" y="321.65" width="5.5" height="5.5" fill="#fff" stroke="#10108c" stroke-width="1.5"/><path d="M560.34 322.9 V326.4 M561.74 322.9 V326.4" stroke="#8890d0" stroke-width=".7"/>
<text x="736.2" y="316.3" font-size="2.6" fill="#6a4fae">P3</text><text x="736.7" y="319.7" font-size="2.6" fill="#6f86d6">100x75x40 mm</text><rect x="736.95" y="321.65" width="5.5" height="5.5" fill="#fff" stroke="#10108c" stroke-width="1.5"/><path d="M739.14 322.9 V326.4 M740.54 322.9 V326.4" stroke="#8890d0" stroke-width=".7"/>
<text x="819.4" y="305.8" font-size="2.6" fill="#6a4fae">P3</text><text x="819.9" y="309.2" font-size="2.6" fill="#6f86d6">100x75x40 mm</text><rect x="820.15" y="311.15" width="5.5" height="5.5" fill="#fff" stroke="#10108c" stroke-width="1.5"/><path d="M822.34 312.4 V315.9 M823.74 312.4 V315.9" stroke="#8890d0" stroke-width=".7"/>
<text x="823.2" y="316.3" font-size="2.6" fill="#6a4fae">P3</text><text x="823.7" y="319.7" font-size="2.6" fill="#6f86d6">100x75x40 mm</text><rect x="823.95" y="321.65" width="5.5" height="5.5" fill="#fff" stroke="#10108c" stroke-width="1.5"/><path d="M826.14 322.9 V326.4 M827.54 322.9 V326.4" stroke="#8890d0" stroke-width=".7"/>
<text x="481.2" y="581.1" font-size="2.6" fill="#6a4fae">P3</text><text x="481.7" y="584.5" font-size="2.6" fill="#6f86d6">100x75x40 mm</text><rect x="481.95" y="586.45" width="5.5" height="5.5" fill="#fff" stroke="#10108c" stroke-width="1.5"/><path d="M484.14 587.7 V591.2 M485.54 587.7 V591.2" stroke="#8890d0" stroke-width=".7"/>
<text x="813.8" y="579.8" font-size="2.6" fill="#6a4fae">P3</text><text x="814.3" y="583.2" font-size="2.6" fill="#6f86d6">100x75x40 mm</text><rect x="814.55" y="585.15" width="5.5" height="5.5" fill="#fff" stroke="#10108c" stroke-width="1.5"/><path d="M816.74 586.4 V589.9 M818.14 586.4 V589.9" stroke="#8890d0" stroke-width=".7"/>
<text x="605.6" y="587.8" font-size="2.6" fill="#6a4fae">P3</text><text x="606.1" y="591.2" font-size="2.6" fill="#6f86d6">100x75x40 mm</text><rect x="606.35" y="593.15" width="5.5" height="5.5" fill="#fff" stroke="#10108c" stroke-width="1.5"/><path d="M608.54 594.4 V597.9 M609.94 594.4 V597.9" stroke="#8890d0" stroke-width=".7"/>
<text x="689.2" y="587.8" font-size="2.6" fill="#6a4fae">P3</text><text x="689.7" y="591.2" font-size="2.6" fill="#6f86d6">100x75x40 mm</text><rect x="689.95" y="593.15" width="5.5" height="5.5" fill="#fff" stroke="#10108c" stroke-width="1.5"/><path d="M692.14 594.4 V597.9 M693.54 594.4 V597.9" stroke="#8890d0" stroke-width=".7"/>
<rect x="610.7" y="499.3" width="12.8" height="13.4" fill="#fff" stroke="#7d7dc8" stroke-width="1"/><rect x="612.1" y="500.7" width="10" height="10.6" fill="#fff" stroke="#10108c" stroke-width="1.5"/><text x="617.1" y="506.9" font-size="2.4" fill="#5a5ab8" text-anchor="middle">P3</text>
<rect x="603.4" y="527.4" width="12.8" height="13.4" fill="#fff" stroke="#7d7dc8" stroke-width="1"/><rect x="604.8" y="528.8" width="10" height="10.6" fill="#fff" stroke="#10108c" stroke-width="1.5"/><text x="609.8" y="535" font-size="2.4" fill="#5a5ab8" text-anchor="middle">PTR</text>
<rect x="685.1" y="527.4" width="13.2" height="13.4" fill="#fff" stroke="#7d7dc8" stroke-width="1"/><rect x="686.5" y="528.8" width="10.4" height="10.6" fill="#fff" stroke="#10108c" stroke-width="1.5"/><text x="691.7" y="535" font-size="2.4" fill="#5a5ab8" text-anchor="middle">PTR</text>
<g font-size="5.6" fill="#1f9ad0">
<text x="401.75" y="277.75" textLength="40" lengthAdjust="spacingAndGlyphs">Bedroom 1 P3A</text>
<text x="401.75" y="286" textLength="37.75" lengthAdjust="spacingAndGlyphs">(RESIDENTIAL)</text>
<text x="490.75" y="277.75" textLength="40" lengthAdjust="spacingAndGlyphs">Bedroom 2 P3A</text>
<text x="490" y="286" textLength="38" lengthAdjust="spacingAndGlyphs">(RESIDENTIAL)</text>
<text x="580.75" y="240.75" textLength="30.5" lengthAdjust="spacingAndGlyphs">Kitchen P3A</text>
<text x="573.25" y="249" textLength="37.5" lengthAdjust="spacingAndGlyphs">(RESIDENTIAL)</text>
<text x="673" y="240.75" textLength="30.75" lengthAdjust="spacingAndGlyphs">Kitchen P3B</text>
<text x="665.75" y="249" textLength="38" lengthAdjust="spacingAndGlyphs">(RESIDENTIAL)</text>
<text x="748.75" y="277.75" textLength="39.5" lengthAdjust="spacingAndGlyphs">Bedroom 2 P3B</text>
<text x="748" y="286" textLength="37.75" lengthAdjust="spacingAndGlyphs">(RESIDENTIAL)</text>
<text x="834.5" y="277.75" textLength="39.75" lengthAdjust="spacingAndGlyphs">Bedroom 1 P3B</text>
<text x="833.75" y="286" textLength="38" lengthAdjust="spacingAndGlyphs">(RESIDENTIAL)</text>
<text x="381.25" y="391.5" textLength="41.25" lengthAdjust="spacingAndGlyphs">Bathroom 2 P3A</text>
<text x="381.25" y="399.5" textLength="38" lengthAdjust="spacingAndGlyphs">(RESIDENTIAL)</text>
<text x="452.5" y="398" textLength="31.75" lengthAdjust="spacingAndGlyphs">Corridor P3A</text>
<text x="447" y="406.25" textLength="38" lengthAdjust="spacingAndGlyphs">(RESIDENTIAL)</text>
<text x="640" y="399.5" textLength="15.5" lengthAdjust="spacingAndGlyphs">Lift P3</text>
<text x="802.5" y="398" textLength="31.75" lengthAdjust="spacingAndGlyphs">Corridor P3B</text>
<text x="796.25" y="406.25" textLength="38" lengthAdjust="spacingAndGlyphs">(RESIDENTIAL)</text>
<text x="861.25" y="391.5" textLength="40.75" lengthAdjust="spacingAndGlyphs">Bathroom 2 P3B</text>
<text x="862" y="399.5" textLength="37.5" lengthAdjust="spacingAndGlyphs">(RESIDENTIAL)</text>
<text x="378.75" y="492" textLength="40.75" lengthAdjust="spacingAndGlyphs">Bathroom 1 P3A</text>
<text x="378.75" y="500" textLength="38" lengthAdjust="spacingAndGlyphs">(RESIDENTIAL)</text>
<text x="413.25" y="594" textLength="39.75" lengthAdjust="spacingAndGlyphs">Bedroom 3 P3A</text>
<text x="413.25" y="602" textLength="38" lengthAdjust="spacingAndGlyphs">(RESIDENTIAL)</text>
<text x="531.25" y="568.75" textLength="43" lengthAdjust="spacingAndGlyphs">Dining room P3A</text>
<text x="532" y="577" textLength="38" lengthAdjust="spacingAndGlyphs">(RESIDENTIAL)</text>
<text x="630" y="498.75" textLength="27.5" lengthAdjust="spacingAndGlyphs">Corridor P3</text>
<text x="726.75" y="559.5" textLength="43.25" lengthAdjust="spacingAndGlyphs">Dining room P3B</text>
<text x="728.25" y="568.75" textLength="38" lengthAdjust="spacingAndGlyphs">(RESIDENTIAL)</text>
<text x="855" y="492" textLength="41.25" lengthAdjust="spacingAndGlyphs">Bathroom 1 P3B</text>
<text x="855" y="500" textLength="38" lengthAdjust="spacingAndGlyphs">(RESIDENTIAL)</text>
<text x="839.5" y="585" textLength="39.75" lengthAdjust="spacingAndGlyphs">Bedroom 3 P3B</text>
<text x="838.75" y="594" textLength="38.25" lengthAdjust="spacingAndGlyphs">(RESIDENTIAL)</text>
</g>
</svg>
</body></html>
